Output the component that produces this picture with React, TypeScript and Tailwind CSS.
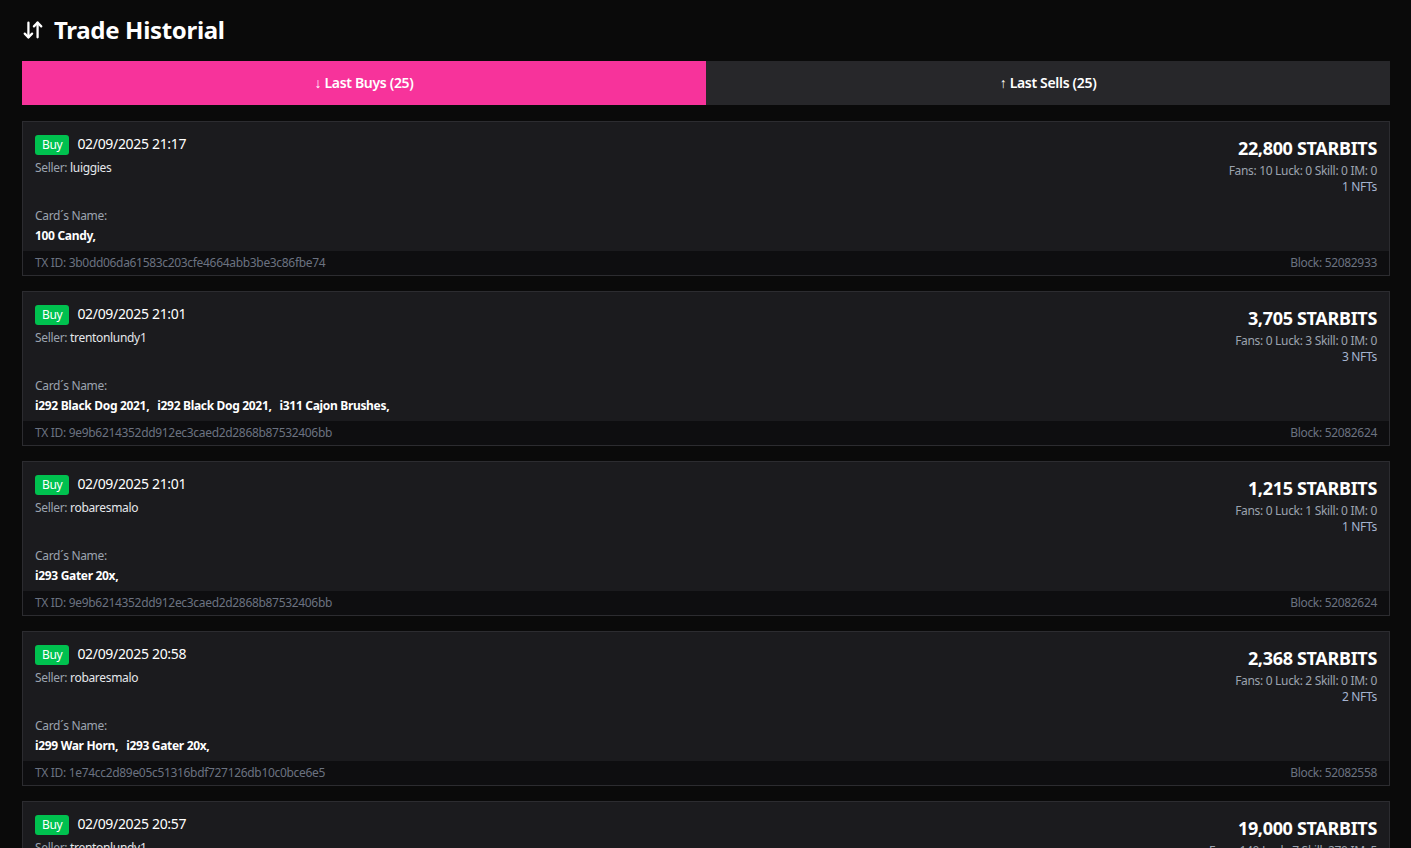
import { ArrowDownUp } from "lucide-react";

type Trade = {
  date: string;
  seller: string;
  cards: string[];
  tx: string;
  block: string;
  amount: string;
  fans: number;
  luck: number;
  skill: number;
  im: number;
  nfts: number;
};

const trades: Trade[] = [
  {
    date: "02/09/2025 21:17",
    seller: "luiggies",
    cards: ["100 Candy"],
    tx: "3b0dd06da61583c203cfe4664abb3be3c86fbe74",
    block: "52082933",
    amount: "22,800",
    fans: 10,
    luck: 0,
    skill: 0,
    im: 0,
    nfts: 1,
  },
  {
    date: "02/09/2025 21:01",
    seller: "trentonlundy1",
    cards: ["i292 Black Dog 2021", "i292 Black Dog 2021", "i311 Cajon Brushes"],
    tx: "9e9b6214352dd912ec3caed2d2868b87532406bb",
    block: "52082624",
    amount: "3,705",
    fans: 0,
    luck: 3,
    skill: 0,
    im: 0,
    nfts: 3,
  },
  {
    date: "02/09/2025 21:01",
    seller: "robaresmalo",
    cards: ["i293 Gater 20x"],
    tx: "9e9b6214352dd912ec3caed2d2868b87532406bb",
    block: "52082624",
    amount: "1,215",
    fans: 0,
    luck: 1,
    skill: 0,
    im: 0,
    nfts: 1,
  },
  {
    date: "02/09/2025 20:58",
    seller: "robaresmalo",
    cards: ["i299 War Horn", "i293 Gater 20x"],
    tx: "1e74cc2d89e05c51316bdf727126db10c0bce6e5",
    block: "52082558",
    amount: "2,368",
    fans: 0,
    luck: 2,
    skill: 0,
    im: 0,
    nfts: 2,
  },
  {
    date: "02/09/2025 20:57",
    seller: "trentonlundy1",
    cards: ["i301 Grand Piano"],
    tx: "5c0a1f2b3e9d7c84a6b21f0e3d9c7a5b4e2f1d0c",
    block: "52082540",
    amount: "19,000",
    fans: 140,
    luck: 7,
    skill: 270,
    im: 5,
    nfts: 1,
  },
];

const TradeCard = ({ trade }: { trade: Trade }): JSX.Element => (
  <div className="border border-[#2c2c30] bg-[#1b1b1e]">
    <div className="flex justify-between px-3 pt-3 pb-[7px]">
      <div className="flex flex-col">
        <div className="flex h-[22px] items-center gap-2">
          <span className="h-5 rounded-[3px] bg-[#00c14f] px-[7px] text-[12px] leading-5 text-white">
            Buy
          </span>
          <span className="pb-[2px] text-[14px] leading-none text-white">{trade.date}</span>
        </div>
        <div className="mt-1 text-[12px] leading-4 text-[#9ca3af]">
          Seller: <span className="text-[#e5e7eb]">{trade.seller}</span>
        </div>
        <div className="mt-8 text-[12px] leading-4 text-[#9ca3af]">Card´s Name:</div>
        <div className="mt-1 flex gap-2 text-[12px] leading-4 font-bold text-white">
          {trade.cards.map((c, i) => (
            <span key={i}>{c},</span>
          ))}
        </div>
      </div>
      <div className="flex flex-col items-end">
        <div className="text-[18px] leading-7 font-bold text-white">{trade.amount} STARBITS</div>
        <div className="mt-px text-[12px] leading-4 text-[#9ca3af]">
          Fans: {trade.fans} Luck: {trade.luck} Skill: {trade.skill} IM: {trade.im}
        </div>
        <div className="text-[12px] leading-4 text-[#a5b4d0]">{trade.nfts} NFTs</div>
      </div>
    </div>
    <div className="flex h-6 items-center justify-between bg-[#0e0e10] px-3 text-[12px] text-[#6b7280]">
      <span>TX ID: {trade.tx}</span>
      <span>Block: {trade.block}</span>
    </div>
  </div>
);

export default function App(): JSX.Element {
  return (
    <div
      className="min-h-screen bg-[#0a0a0a] pt-4 pr-[21px] pb-6 pl-[22px] tracking-[-0.02em] text-white"
      style={{ fontFamily: '"Noto Sans", "Open Sans", sans-serif' }}
    >
      <h1 className="flex h-7 items-center gap-[10px] text-[24px] font-bold">
        <ArrowDownUp size={22} strokeWidth={2.5} />
        Trade Historial
      </h1>
      <div className="mt-[17px] flex h-11">
        <button className="flex-1 bg-[#f7339b] pb-[2px] text-[14px] font-semibold text-white">
          ↓ Last Buys (25)
        </button>
        <button className="flex-1 bg-[#27272a] pb-[2px] text-[14px] font-semibold text-white">
          ↑ Last Sells (25)
        </button>
      </div>
      <div className="mt-4 flex flex-col gap-[15px]">
        {trades.map((t, i) => (
          <TradeCard key={i} trade={t} />
        ))}
      </div>
    </div>
  );
}
